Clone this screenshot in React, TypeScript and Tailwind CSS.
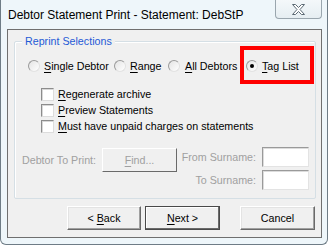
import React from "react";

// Small helper: letter with access-key underline
const U: React.FC<{ children: React.ReactNode }> = ({ children }) => (
  <span className="underline underline-offset-[2px] decoration-[1px]">{children}</span>
);

const Radio: React.FC<{ checked?: boolean }> = ({ checked }) => (
  <span className="w-[12px] h-[12px] rounded-full border border-[#9a9a9a] border-b-[#e2e2e2] border-r-[#e2e2e2] bg-[linear-gradient(135deg,#e4e4e4,#ffffff)] flex items-center justify-center shrink-0">
    {checked && <span className="w-[4px] h-[4px] rounded-full bg-black" />}
  </span>
);

const Check: React.FC = () => (
  <span className="w-[13px] h-[13px] border border-[#8c8c8c] border-b-[#dcdcdc] border-r-[#dcdcdc] bg-white shadow-[inset_1px_1px_0_#d8d8d8] shrink-0" />
);

// Win classic-ish push button
const Btn: React.FC<{ children: React.ReactNode; className?: string; isDefault?: boolean; disabled?: boolean }> = ({
  children,
  className,
  isDefault,
  disabled,
}) => (
  <div
    className={`h-[24px] flex items-center justify-center bg-[#f0f0f0] border ${
      isDefault
        ? "border-[#4a4a4a] shadow-[inset_-1px_-1px_0_#6a6a6a,inset_1px_1px_0_#ffffff]"
        : "border-t-[#ffffff] border-l-[#ffffff] border-b-[#6a6a6a] border-r-[#6a6a6a] shadow-[inset_-1px_-1px_0_#a0a0a0,inset_1px_1px_0_#e3e3e3]"
    } ${disabled ? "text-[#a0a0a0]" : "text-black"} ${className || ""}`}
  >
    {children}
  </div>
);

const TextBox: React.FC = () => (
  <div className="w-[47px] h-[20px] bg-white border border-[#9a9a9a] border-b-[#e3e3e3] border-r-[#e3e3e3] shadow-[inset_1px_1px_0_#dcdcdc]" />
);

export default function App() {
  return (
    <div className="w-[329px] h-[245px] bg-white overflow-hidden font-['Liberation_Sans',Arial,sans-serif] text-[10.7px] leading-none text-black">
      {/* window frame */}
      <div className="w-[328px] h-[245px] bg-[#eef6fa] border-x border-b border-[#6e7c86] rounded-b-[6px] flex flex-col">
        {/* title bar */}
        <div className="h-[29px] flex items-start justify-between shrink-0">
          <span className="ml-[7px] mt-[8px] text-[12px] leading-[14px]">
            Debtor Statement Print - Statement: DebStP
          </span>
          <div className="mr-[5px] w-[47px] h-[19px] border border-t-0 border-[#9aa6ae] rounded-b-[4px] bg-[linear-gradient(#f4f8fa,#e6eef2)] flex items-center justify-center">
            <svg width="13" height="11" viewBox="0 0 13 11">
              <polygon
                points="0.5,0.5 3.5,0.5 6.5,3.5 9.5,0.5 12.5,0.5 8,5.5 12.5,10.5 9.5,10.5 6.5,7.5 3.5,10.5 0.5,10.5 5,5.5"
                fill="#ffffff"
                stroke="#5c6a74"
                strokeWidth="1"
              />
            </svg>
          </div>
        </div>

        {/* client area */}
        <div className="ml-[6px] w-[315px] h-[209px] border border-[#6f6f6f] bg-[#f0f0f0] flex flex-col shrink-0">
          {/* group box */}
          <div className="relative ml-[6px] mt-[11px] w-[302px] h-[158px] border border-[#d5dfe5] rounded-[2px] shadow-[inset_1px_1px_0_#ffffff] flex flex-col">
            <span className="absolute left-[7px] top-[-7px] px-[3px] bg-[#f0f0f0] text-[#1f5ad6] leading-[13px]">
              Reprint Selections
            </span>

            {/* red highlight around the chosen option */}
            <div className="absolute left-[225px] top-[4px] w-[74px] h-[38px] border-[4px] border-[#ff0000]" />

            {/* radio options */}
            <div className="mt-[15px] h-[18px] pl-[13px] flex items-center">
              <div className="w-[86px] flex items-center gap-[4px]">
                <Radio />
                <span><U>S</U>ingle Debtor</span>
              </div>
              <div className="w-[54px] flex items-center gap-[4px]">
                <Radio />
                <span><U>R</U>ange</span>
              </div>
              <div className="w-[78px] flex items-center gap-[5px]">
                <Radio />
                <span><U>A</U>ll Debtors</span>
              </div>
              <div className="flex items-center gap-[4px]">
                <Radio checked />
                <span><U>T</U>ag List</span>
              </div>
            </div>

            {/* checkboxes */}
            <div className="mt-[11px] pl-[26px] flex flex-col">
              <div className="h-[16px] flex items-center gap-[4px]">
                <Check />
                <span><U>R</U>egenerate archive</span>
              </div>
              <div className="h-[16px] flex items-center gap-[4px]">
                <Check />
                <span><U>P</U>review Statements</span>
              </div>
              <div className="h-[16px] flex items-center gap-[4px]">
                <Check />
                <span><U>M</U>ust have unpaid charges on statements</span>
              </div>
            </div>

            {/* debtor / surname range */}
            <div className="mt-[13px] flex justify-between">
              <div className="ml-[7px] mt-[1px] h-[24px] flex items-center text-[#a0a0a0]">
                <span className="w-[80px]">Debtor To Print:</span>
                <Btn disabled className="w-[75px] border-[#c8c8c8] shadow-none">
                  <span><U>F</U>ind...</span>
                </Btn>
              </div>
              <div className="mr-[6px] flex flex-col gap-[3px] text-[#a0a0a0]">
                <div className="flex items-center justify-end gap-[6px]">
                  <span>From Surname:</span>
                  <TextBox />
                </div>
                <div className="flex items-center justify-end gap-[6px]">
                  <span>To Surname:</span>
                  <TextBox />
                </div>
              </div>
            </div>
          </div>

          {/* wizard buttons */}
          <div className="mt-[7px] ml-[59px] flex">
            <Btn className="w-[74px]">
              <span>&lt; <U>B</U>ack</span>
            </Btn>
            <Btn isDefault className="ml-[4px] w-[75px]">
              <span><U>N</U>ext &gt;</span>
            </Btn>
            <Btn className="ml-[20px] w-[75px]">
              <span>Cancel</span>
            </Btn>
          </div>
        </div>
      </div>
    </div>
  );
}
